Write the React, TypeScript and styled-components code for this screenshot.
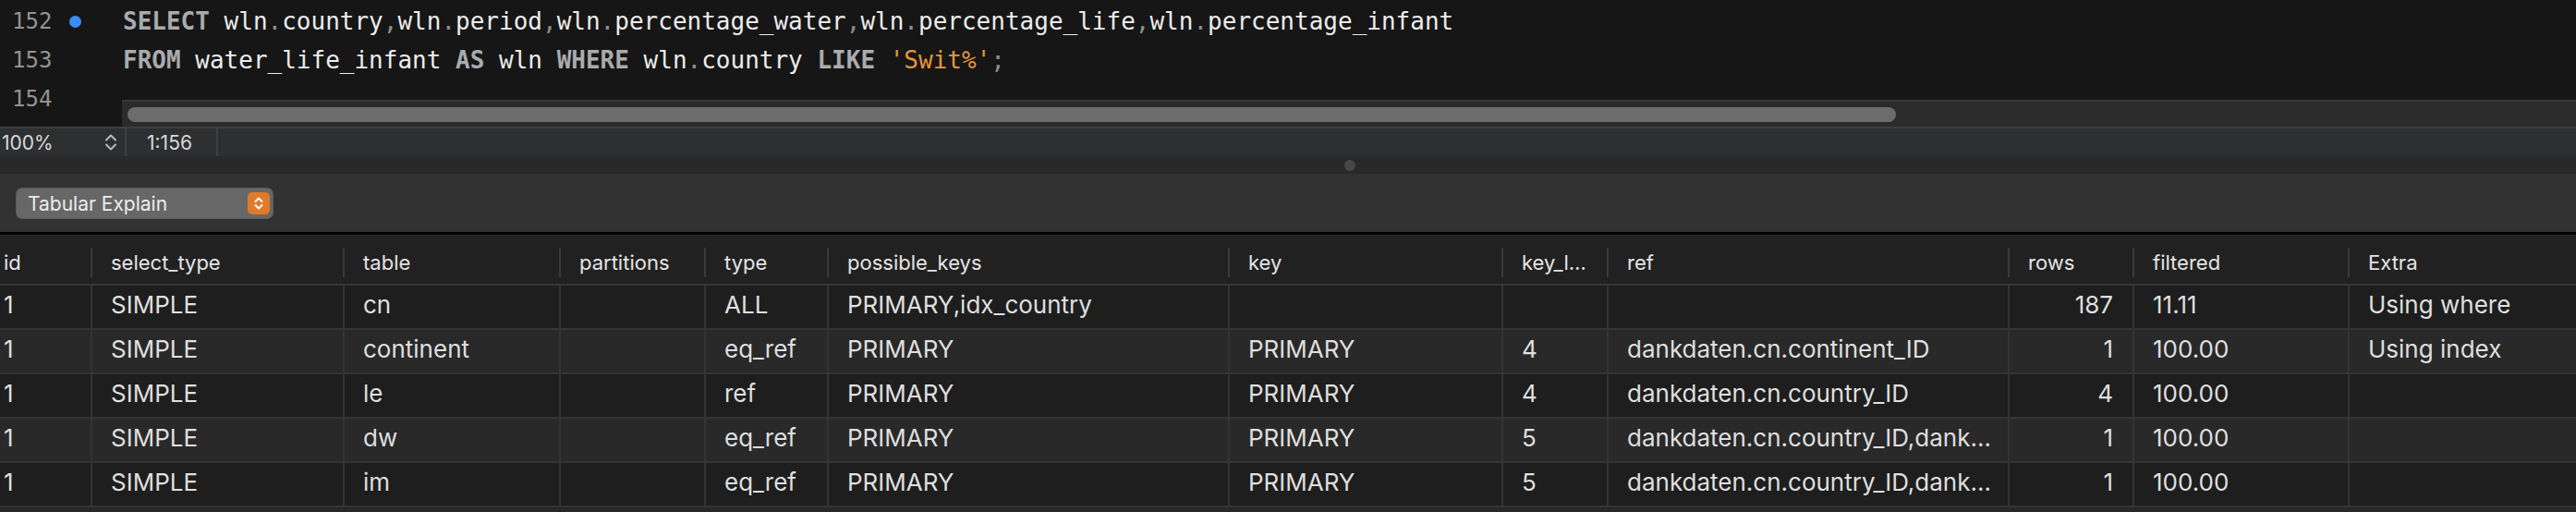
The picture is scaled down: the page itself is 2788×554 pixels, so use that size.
import React from 'react';
import styled, { createGlobalStyle } from 'styled-components';

const KEYWORDS = ['SELECT', 'FROM', 'AS', 'WHERE', 'LIKE'];

const CODE = [
  {
    no: 152,
    marked: true,
    text: 'SELECT wln.country,wln.period,wln.percentage_water,wln.percentage_life,wln.percentage_infant',
  },
  { no: 153, marked: false, text: "FROM water_life_infant AS wln WHERE wln.country LIKE 'Swit%';" },
  { no: 154, marked: false, text: '' },
];

type Kind = 'kw' | 'id' | 'punct' | 'str';

function tokenize(line: string): { text: string; kind: Kind }[] {
  const parts = line.match(/'[^']*'|[A-Za-z_][A-Za-z0-9_]*|[.,;]|\s+|./g) || [];
  return parts.map((p) => {
    if (p.startsWith("'")) return { text: p, kind: 'str' };
    if (KEYWORDS.includes(p)) return { text: p, kind: 'kw' };
    if (/^[.,;]$/.test(p)) return { text: p, kind: 'punct' };
    return { text: p, kind: 'id' };
  });
}

const COLUMNS = [
  { key: 'id', label: 'id', width: 98 },
  { key: 'select_type', label: 'select_type', width: 273 },
  { key: 'table', label: 'table', width: 234 },
  { key: 'partitions', label: 'partitions', width: 157 },
  { key: 'type', label: 'type', width: 133 },
  { key: 'possible_keys', label: 'possible_keys', width: 434 },
  { key: 'key', label: 'key', width: 296 },
  { key: 'key_len', label: 'key_l…', width: 114 },
  { key: 'ref', label: 'ref', width: 434 },
  { key: 'rows', label: 'rows', width: 135, numeric: true },
  { key: 'filtered', label: 'filtered', width: 233 },
  { key: 'Extra', label: 'Extra', width: 247 },
];

const ROWS: Record<string, string>[] = [
  { id: '1', select_type: 'SIMPLE', table: 'cn', partitions: '', type: 'ALL', possible_keys: 'PRIMARY,idx_country', key: '', key_len: '', ref: '', rows: '187', filtered: '11.11', Extra: 'Using where' },
  { id: '1', select_type: 'SIMPLE', table: 'continent', partitions: '', type: 'eq_ref', possible_keys: 'PRIMARY', key: 'PRIMARY', key_len: '4', ref: 'dankdaten.cn.continent_ID', rows: '1', filtered: '100.00', Extra: 'Using index' },
  { id: '1', select_type: 'SIMPLE', table: 'le', partitions: '', type: 'ref', possible_keys: 'PRIMARY', key: 'PRIMARY', key_len: '4', ref: 'dankdaten.cn.country_ID', rows: '4', filtered: '100.00', Extra: '' },
  { id: '1', select_type: 'SIMPLE', table: 'dw', partitions: '', type: 'eq_ref', possible_keys: 'PRIMARY', key: 'PRIMARY', key_len: '5', ref: 'dankdaten.cn.country_ID,dank…', rows: '1', filtered: '100.00', Extra: '' },
  { id: '1', select_type: 'SIMPLE', table: 'im', partitions: '', type: 'eq_ref', possible_keys: 'PRIMARY', key: 'PRIMARY', key_len: '5', ref: 'dankdaten.cn.country_ID,dank…', rows: '1', filtered: '100.00', Extra: '' },
];

const GRID = COLUMNS.map((c) => `${c.width}px`).join(' ');

function Stepper() {
  return (
    <svg width="14" height="22" viewBox="0 0 14 22" fill="none">
      <path d="M2 8.5 L7 3.5 L12 8.5" stroke="#b8b8b8" strokeWidth="2" strokeLinecap="round" strokeLinejoin="round" />
      <path d="M2 13.5 L7 18.5 L12 13.5" stroke="#b8b8b8" strokeWidth="2" strokeLinecap="round" strokeLinejoin="round" />
    </svg>
  );
}

function App() {
  return (
    <Wrap>
      <GlobalStyle />
      <Editor>
        <Gutter>
          {CODE.map((l) => (
            <GutterLine key={l.no}>
              <LineNo>{l.no}</LineNo>
              {l.marked && <Marker />}
            </GutterLine>
          ))}
        </Gutter>
        <CodeArea>
          <Lines>
            {CODE.map((l) => (
              <CodeLine key={l.no}>
                {tokenize(l.text).map((t, i) => (
                  <Token key={i} $kind={t.kind}>
                    {t.text}
                  </Token>
                ))}
              </CodeLine>
            ))}
          </Lines>
          <HScroll>
            <Thumb />
          </HScroll>
        </CodeArea>
      </Editor>

      <StatusBar>
        <ZoomBox>
          <span>100%</span>
          <Stepper />
        </ZoomBox>
        <Position>1:156</Position>
      </StatusBar>

      <Splitter>
        <Grip />
      </Splitter>

      <Panel>
        <Popup>
          <span>Tabular Explain</span>
          <PopupButton>
            <svg width="24" height="24" viewBox="0 0 24 24" fill="none">
              <path d="M8.5 10 L12 6.5 L15.5 10" stroke="#fff" strokeWidth="2" strokeLinecap="round" strokeLinejoin="round" />
              <path d="M8.5 14 L12 17.5 L15.5 14" stroke="#fff" strokeWidth="2" strokeLinecap="round" strokeLinejoin="round" />
            </svg>
          </PopupButton>
        </Popup>
      </Panel>

      <Table>
        <HeaderRow>
          {COLUMNS.map((c, i) => (
            <HeaderCell key={c.key} $first={i === 0}>
              {c.label}
            </HeaderCell>
          ))}
        </HeaderRow>
        {ROWS.map((r, ri) => (
          <Row key={ri} $alt={ri % 2 === 1}>
            {COLUMNS.map((c, i) => (
              <Cell key={c.key} $first={i === 0} $numeric={!!c.numeric}>
                {r[c.key]}
              </Cell>
            ))}
          </Row>
        ))}
      </Table>
    </Wrap>
  );
}

const GlobalStyle = createGlobalStyle`
  html, body {
    margin: 0;
    padding: 0;
    background: #282828;
  }
`;

const Wrap = styled.div`
  display: flex;
  flex-direction: column;
  width: 2788px;
  height: 554px;
  overflow: hidden;
  font-family: 'Inter', 'Liberation Sans', sans-serif;
  color: #dedede;
`;

// editor
const Editor = styled.section`
  display: flex;
  height: 137px;
  background: #161616;
`;
const Gutter = styled.div`
  display: flex;
  flex-direction: column;
  width: 132px;
  padding-top: 2px;
  box-sizing: border-box;
`;
const GutterLine = styled.div`
  display: flex;
  align-items: center;
  height: 42px;
  padding-left: 13px;
`;
const LineNo = styled.span`
  font-family: 'DejaVu Sans Mono', monospace;
  font-size: 24px;
  color: #939393;
`;
const Marker = styled.span`
  width: 13px;
  height: 13px;
  margin-left: 19px;
  border-radius: 50%;
  background: #3b8cf3;
`;
const CodeArea = styled.div`
  display: flex;
  flex: 1;
  flex-direction: column;
`;
const Lines = styled.div`
  height: 108px;
  padding-top: 2px;
  box-sizing: border-box;
  overflow: hidden;
`;
const CodeLine = styled.div`
  height: 42px;
  line-height: 42px;
  padding-left: 1px;
  font-family: 'DejaVu Sans Mono', monospace;
  font-size: 26px;
  white-space: pre;
`;
const TOKEN_COLORS: Record<Kind, string> = {
  kw: '#a9abad',
  id: '#ececec',
  punct: '#8e8e8e',
  str: '#e5953a',
};
const Token = styled.span<{ $kind: Kind }>`
  color: ${(p) => TOKEN_COLORS[p.$kind]};
  font-weight: ${(p) => (p.$kind === 'kw' ? 700 : 400)};
`;
const HScroll = styled.div`
  display: flex;
  align-items: center;
  height: 29px;
  padding-left: 6px;
  box-sizing: border-box;
  background: #2b2b2b;
  border-top: 2px solid #3a3a3a;
`;
const Thumb = styled.div`
  width: 1914px;
  height: 16px;
  border-radius: 8px;
  background: #6c6c6c;
`;

// status bar
const StatusBar = styled.div`
  display: flex;
  height: 30px;
  background: #2e2f31;
  border-top: 2px solid #3e3e3e;
  font-size: 21px;
  color: #dadada;
`;
const ZoomBox = styled.div`
  display: flex;
  align-items: center;
  justify-content: space-between;
  width: 137px;
  padding: 0 8px 0 2px;
  box-sizing: border-box;
  border-right: 2px solid #3f4042;
`;
const Position = styled.div`
  display: flex;
  align-items: center;
  width: 99px;
  padding-left: 22px;
  box-sizing: border-box;
  border-right: 2px solid #3f4042;
`;

const Splitter = styled.div`
  display: flex;
  align-items: center;
  justify-content: center;
  height: 19px;
  padding-left: 133px;
  box-sizing: border-box;
  background: #292929;
`;
const Grip = styled.span`
  width: 12px;
  height: 12px;
  border-radius: 50%;
  background: #474747;
`;

const Panel = styled.div`
  display: flex;
  align-items: flex-start;
  height: 66px;
  padding: 16px 0 0 18px;
  box-sizing: border-box;
  background: #323232;
  border-bottom: 3px solid #000;
`;
const Popup = styled.div`
  display: flex;
  align-items: center;
  justify-content: space-between;
  width: 277px;
  height: 32px;
  padding: 0 3px 0 12px;
  box-sizing: border-box;
  border-radius: 6px;
  background: #676767;
  box-shadow: 0 0 0 1px #5a5a5a;
  font-size: 21px;
  color: #ececec;
`;
const PopupButton = styled.span`
  display: flex;
  width: 24px;
  height: 24px;
  border-radius: 5px;
  background: #e27a2b;
`;

// table
const Table = styled.section`
  display: flex;
  flex-direction: column;
  background: #282828;
  border-top: 1px solid #2c2c2c;
`;
const HeaderRow = styled.div`
  display: grid;
  grid-template-columns: ${GRID};
  align-items: center;
  height: 54px;
  padding-top: 5px;
  box-sizing: border-box;
  background: #212121;
  border-bottom: 2px solid #363636;
`;
const HeaderCell = styled.div<{ $first: boolean }>`
  display: flex;
  align-items: center;
  height: 32px;
  padding-left: ${(p) => (p.$first ? '4px' : '20px')};
  border-left: ${(p) => (p.$first ? 'none' : '2px solid #3a3a3a')};
  font-size: 22px;
  color: #e4e4e4;
  white-space: nowrap;
  overflow: hidden;
`;
const Row = styled.div<{ $alt: boolean }>`
  display: grid;
  grid-template-columns: ${GRID};
  height: 48px;
  box-sizing: border-box;
  background: ${(p) => (p.$alt ? '#292929' : '#1e1e1e')};
  border-bottom: 2px solid #343434;
`;
const Cell = styled.div<{ $first: boolean; $numeric: boolean }>`
  height: 46px;
  padding: 6px ${(p) => (p.$numeric ? '21px' : '12px')} 0 ${(p) => (p.$first ? '4px' : '20px')};
  box-sizing: border-box;
  border-left: ${(p) => (p.$first ? 'none' : '2px solid #343434')};
  font-size: 26px;
  line-height: 30px;
  color: #dfdfdf;
  text-align: ${(p) => (p.$numeric ? 'right' : 'left')};
  white-space: nowrap;
  overflow: hidden;
  text-overflow: ellipsis;
`;

export default App;
